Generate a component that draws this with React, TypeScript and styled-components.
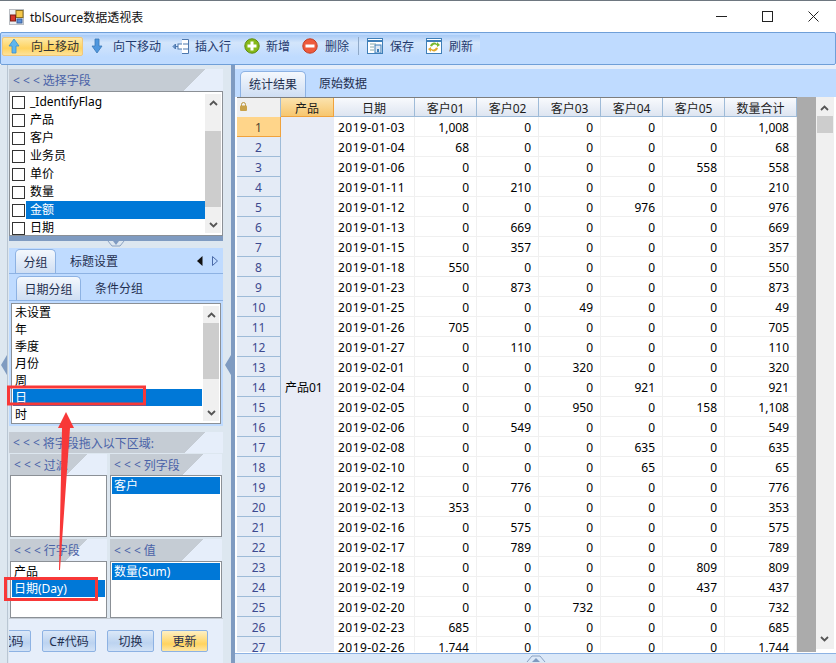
import React from 'react'
import styled, { createGlobalStyle } from 'styled-components'

const FONT = `"Noto Sans", "Noto Sans CJK SC", sans-serif`

const GlobalStyle = createGlobalStyle`
  html, body {
    margin: 0;
    padding: 0;
    background: #fff;
  }
  body {
    font-family: ${FONT};
    font-size: 12px;
    color: #000;
  }
`

const Win = styled.div`
  position: relative;
  width: 836px;
  height: 663px;
  overflow: hidden;
  background: #fff;
  border-top: 1px solid #6e7780;
  box-sizing: border-box;
  display: flex;
  flex-direction: column;
`

const TitleBar = styled.div`
  height: 31px;
  flex: none;
  display: flex;
  align-items: center;
  padding-left: 9px;
  gap: 6px;
`

const TitleText = styled.div`
  flex: 1;
  font-size: 12px;
  color: #111;
`

const WinButtons = styled.div`
  display: flex;
  align-items: center;
  padding-right: 17px;
  gap: 35px;
`

const Toolbar = styled.div`
  height: 33px;
  flex: none;
  box-sizing: border-box;
  background: #bfdbff;
  border: 1px solid #6f9fd8;
  border-radius: 2px;
  padding: 2px 0 0 1px;
`

const ToolStrip = styled.div`
  width: 478px;
  height: 22px;
  display: flex;
  align-items: center;
  background: linear-gradient(#a9cbf6 0%, #d3e5fb 35%, #bfdbff 100%);
`

const ToolButton = styled.div<{ $active?: boolean; $w: number; $pad: number; $gap: number }>`
  width: ${p => p.$w}px;
  height: 19px;
  flex: none;
  box-sizing: border-box;
  display: flex;
  align-items: center;
  padding-left: ${p => p.$pad}px;
  gap: ${p => p.$gap}px;
  color: #1f3a6e;
  white-space: nowrap;
  ${p => p.$active && `
    color: #333;
    background: linear-gradient(#fde9a8, #ffd35f 60%, #fde29a);
    border: 1px solid #f2c878;
    border-radius: 2px;
  `}
`

const ToolSep = styled.div`
  width: 1px;
  height: 18px;
  margin: 0 8px 0 7px;
  flex: none;
  background: #8fa9c8;
`

const Body = styled.div`
  flex: 1;
  min-height: 0;
  display: flex;
  background: #dde7f0;
`

const LeftPanel = styled.div`
  width: 231px;
  flex: none;
  position: relative;
  box-sizing: border-box;
  padding: 4px 8px 0 9px;
  display: flex;
  flex-direction: column;
  overflow: hidden;
  background: linear-gradient(90deg, #dde7f0 7px, #b9c6d3 7px, #b9c6d3 8px, #dde7f0 8px);
`

const SideGrip = styled.div<{ $x: number }>`
  position: absolute;
  left: ${p => p.$x}px;
  top: 290px;
  width: 0;
  height: 0;
  border-top: 10px solid transparent;
  border-bottom: 10px solid transparent;
  border-right: 6px solid #7f9bc1;
`

const Section = styled.div`
  display: flex;
  flex-direction: column;
`

const Cap = styled.div<{ $cut: number; $h?: number }>`
  height: ${p => p.$h ?? 22}px;
  flex: none;
  box-sizing: border-box;
  padding-left: 4px;
  display: flex;
  align-items: center;
  font-size: 12px;
  color: #4a63a8;
  white-space: nowrap;
  background: linear-gradient(135deg, #c5ccd4 ${p => p.$cut}px, #e6eefa ${p => p.$cut}px);
`

const Chevrons = styled.span`
  margin-right: 3px;
  color: #4a63a8;
`

const ListBox = styled.div<{ $h: number }>`
  height: ${p => p.$h}px;
  flex: none;
  box-sizing: border-box;
  background: #fff;
  border: 1px solid #8b9096;
  display: flex;
  overflow: hidden;
`

const ListItems = styled.div<{ $top?: number; $side?: number }>`
  flex: 1;
  min-width: 0;
  padding: ${p => p.$top ?? 1}px ${p => p.$side ?? 0}px 0;
`

const CheckRow = styled.div`
  height: 18px;
  display: flex;
  align-items: center;
  padding-left: 2px;
`

const Box = styled.span`
  width: 13px;
  height: 13px;
  flex: none;
  box-sizing: border-box;
  border: 1px solid #333;
  background: #fff;
  margin-right: 1px;
`

const ItemText = styled.div<{ $sel?: boolean; $h?: number; $pad?: number }>`
  flex: 1;
  height: ${p => p.$h ?? 18}px;
  line-height: ${p => p.$h ?? 18}px;
  padding-left: ${p => p.$pad ?? 2}px;
  white-space: nowrap;
  ${p => p.$sel && 'background: #0078d7; color: #fff;'}
`

const VScroll = styled.div`
  width: 16px;
  flex: none;
  margin: 2px 1px 2px 0;
  background: #f0f0f0;
  display: flex;
  flex-direction: column;
`

const ScrollBtn = styled.div`
  height: 17px;
  flex: none;
  display: flex;
  align-items: center;
  justify-content: center;
`

const Track = styled.div`
  flex: 1;
  min-height: 0;
`

const Thumb = styled.div<{ $top: number; $h: number }>`
  margin-top: ${p => p.$top}px;
  height: ${p => p.$h}px;
  background: #cdcdcd;
`

const BlueStrip = styled.div`
  height: 5px;
  flex: none;
  background: #7f9bc1;
`

const SplitGrip = styled.div<{ $h: number }>`
  height: ${p => p.$h}px;
  flex: none;
  display: flex;
  justify-content: center;
`

const TabArea = styled.div`
  height: 178px;
  flex: none;
  background: #bfdbff;
  display: flex;
  flex-direction: column;
`

const TabRow = styled.div<{ $h: number; $pad: number }>`
  height: ${p => p.$h}px;
  flex: none;
  box-sizing: border-box;
  display: flex;
  align-items: flex-end;
  padding-left: ${p => p.$pad}px;
  border-bottom: 1px solid #8db2e3;
  gap: 14px;
`

const Tab = styled.div<{ $on?: boolean; $w?: number; $tall?: boolean }>`
  height: ${p => (p.$tall ? 26 : 24)}px;
  padding-bottom: ${p => (p.$tall ? 2 : 0)}px;
  box-sizing: border-box;
  display: flex;
  align-items: center;
  justify-content: center;
  color: #1f2f4f;
  font-size: 12px;
  white-space: nowrap;
  ${p => p.$w && `width: ${p.$w}px;`}
  ${p => p.$on && `
    background: linear-gradient(#f4f8fd, #cfdef3);
    border: 1px solid #8db2e3;
    border-bottom: 0;
    border-radius: 5px 5px 0 0;
  `}
`

const TabArrows = styled.div`
  margin-left: auto;
  align-self: center;
  display: flex;
  gap: 9px;
  padding-right: 5px;
`

const InnerFrame = styled.div`
  margin: 2px 2px 0;
`

const DropZones = styled.div`
  display: grid;
  grid-template-columns: 97px 112px;
  column-gap: 3px;
  row-gap: 2px;
  padding: 1px 0 0 1px;
`

const Zone = styled.div`
  display: flex;
  flex-direction: column;
`

const Footer = styled.div`
  height: 45px;
  flex: none;
  background: #e6eefa;
  display: flex;
  justify-content: flex-end;
  gap: 11px;
  padding: 11px 15px 0 0;
  box-sizing: border-box;
  overflow: hidden;
  border-top: 1px solid #c5ccd4;
`

const FootButton = styled.div<{ $w: number; $hot?: boolean }>`
  width: ${p => p.$w}px;
  flex: none;
  height: 22px;
  box-sizing: border-box;
  border: 1px solid #8db2e3;
  border-radius: 2px;
  display: flex;
  align-items: center;
  justify-content: center;
  color: #1f2f4f;
  white-space: nowrap;
  background: ${p =>
    p.$hot
      ? 'linear-gradient(#fdf0c4, #ffd35f 65%, #fee7a6)'
      : 'linear-gradient(#dbe8f8, #bcd3f0 60%, #d2e2f6)'};
  ${p => p.$hot && 'margin-left: -4px;'}
`

const VBar = styled.div`
  width: 4px;
  flex: none;
  background: #7f9bc1;
`

const RightPanel = styled.div`
  flex: 1;
  min-width: 0;
  display: flex;
  flex-direction: column;
`

const LightStrip = styled.div`
  height: 4px;
  flex: none;
  background: #e6eefa;
`

const ResultTabs = styled.div`
  height: 28px;
  flex: none;
  box-sizing: border-box;
  background: #bfdbff;
  display: flex;
  align-items: flex-end;
  padding-left: 5px;
  gap: 13px;
`

const GridWrap = styled.div`
  height: 556px;
  flex: none;
  display: flex;
  background: #fff;
  padding-left: 2px;
  border-bottom: 1px solid #fff;
  box-sizing: border-box;
`

const DataGrid = styled.div`
  width: 560px;
  flex: none;
  display: grid;
  grid-template-columns: 44px 53px 81px 62px 62px 62px 62px 62px 72px;
  grid-template-rows: 19px;
  grid-auto-rows: 20px;
  overflow: hidden;
  align-content: start;
  border-top: 1px solid #7d7d7d;
`

const Corner = styled.div`
  background: #f0f0f0;
  border-right: 1px solid #9ebbd8;
  padding: 4px 0 0 3px;
  box-sizing: border-box;
`

const HeadCell = styled.div<{ $hot?: boolean }>`
  box-sizing: border-box;
  display: flex;
  align-items: center;
  justify-content: center;
  padding-top: 1px;
  color: #1c1c1c;
  border-right: 1px solid #9ebbd8;
  border-bottom: 1px solid #9ebbd8;
  background: linear-gradient(#f8fafd, #dde5f1);
  ${p => p.$hot && `
    background: linear-gradient(#fbe3ae, #f7c66e);
    border-right: 1px solid #f0a23c;
    border-bottom: 1px solid #f0a23c;
  `}
`

const RowHead = styled.div<{ $hot?: boolean }>`
  grid-column: 1;
  box-sizing: border-box;
  display: flex;
  align-items: center;
  justify-content: center;
  padding-top: 1px;
  color: #3d4a8f;
  background: #e4ebf6;
  border-right: 1px solid #9ebbd8;
  border-bottom: 1px solid #9ebbd8;
  ${p => p.$hot && `
    color: #4f4632;
    background: #ffd58a;
    border-right: 1px solid #f0a23c;
    border-bottom: 1px solid #f0a23c;
  `}
`

const ProductCell = styled.div`
  grid-column: 2;
  grid-row: 2 / span 27;
  background: #e8ecf6;
  display: flex;
  align-items: center;
  padding-left: 4px;
`

const Cell = styled.div`
  box-sizing: border-box;
  display: flex;
  align-items: center;
  padding: 1px 7px 0 0;
  justify-content: flex-end;
  border-right: 1px solid #f0f0f0;
  border-bottom: 1px solid #f0f0f0;
  background: #fff;
`

const DateCell = styled(Cell)`
  grid-column: 3;
  justify-content: flex-start;
  padding: 1px 0 0 4px;
  letter-spacing: 0.45px;
`

const GreyFill = styled.div`
  width: 19px;
  flex: none;
  background: #ababab;
`

const GridScroll = styled.div`
  width: 18px;
  flex: none;
  margin-bottom: 3px;
  background: #f0f0f0;
  display: flex;
  justify-content: center;
`

const BottomSplit = styled.div`
  height: 9px;
  flex: none;
  box-sizing: border-box;
  background: #dbe8f8;
  border-top: 1px solid #8db2e3;
  display: flex;
  justify-content: center;
`

const Overlay = styled.svg`
  position: absolute;
  left: 0;
  top: -1px;
  width: 836px;
  height: 663px;
  pointer-events: none;
`

const Chevron = ({ down }: { down?: boolean }) => (
  <svg width="9" height="6" viewBox="0 0 9 6">
    <path
      d={down ? 'M1 1l3.5 3.5L8 1' : 'M1 5l3.5-3.5L8 5'}
      fill="none"
      stroke="#555"
      strokeWidth="1.8"
    />
  </svg>
)

const Scrollbar = ({ top, h }: { top: number; h: number }) => (
  <VScroll>
    <ScrollBtn>
      <Chevron />
    </ScrollBtn>
    <Track>
      <Thumb $top={top} $h={h} />
    </Track>
    <ScrollBtn>
      <Chevron down />
    </ScrollBtn>
  </VScroll>
)

const AppIcon = () => (
  <svg width="15" height="16" viewBox="0 0 15 16">
    <rect x="0.5" y="0.5" width="14" height="15" fill="#eef0f2" stroke="#b9bdc2" />
    <rect x="7" y="1.5" width="7" height="7" fill="#f6c84a" stroke="#8a6d1e" />
    <rect x="1.5" y="6" width="5" height="6" fill="#d9362b" stroke="#7d1f18" />
    <rect x="8" y="10" width="5" height="4" fill="#5b8fd8" stroke="#3a5f98" />
  </svg>
)

const ArrowUp = () => (
  <svg width="12" height="16" viewBox="0 0 12 16">
    <path d="M6 1L11 8H8V15H4V8H1Z" fill="#5fb6ee" stroke="#3a8ecb" strokeWidth="0.8" />
  </svg>
)

const ArrowDown = () => (
  <svg width="12" height="16" viewBox="0 0 12 16">
    <path d="M6 15L1 8H4V1H8V8H11Z" fill="#4f97de" stroke="#3a78b8" strokeWidth="0.8" />
  </svg>
)

const InsertIcon = () => (
  <svg width="17" height="17" viewBox="0 0 17 17">
    <path d="M1 8.5L3.5 6v5zM4 8.5h2" fill="#6c96c8" stroke="#4d78ae" />
    <rect x="6" y="6" width="5" height="5" fill="#fff" stroke="#4d78ae" />
    <path d="M10 1.5h6.5v14H10M11 6h5.5M11 11h5.5" fill="#fff" stroke="#4d78ae" />
  </svg>
)

const RoundIcon = ({ bg, edge, d }: { bg: string; edge: string; d: string }) => (
  <svg width="16" height="16" viewBox="0 0 16 16">
    <circle cx="8" cy="8" r="7.2" fill={bg} stroke={edge} />
    <path d={d} fill="#fff" />
  </svg>
)

const SheetIcon = () => (
  <svg width="16" height="16" viewBox="0 0 16 16">
    <rect x="0.5" y="0.5" width="15" height="15" fill="#fff" stroke="#3f7fb8" />
    <path d="M1 3h14" stroke="#3f7fb8" strokeWidth="2" />
    <path d="M3 6h6M3 9h4M3 12h4" stroke="#8aa" />
    <rect x="8" y="7" width="6" height="8" fill="#dfeaf6" stroke="#3f7fb8" />
    <rect x="10" y="11" width="2" height="3" fill="#3f7fb8" />
  </svg>
)

const RefreshIcon = () => (
  <svg width="16" height="16" viewBox="0 0 16 16">
    <rect x="0.5" y="0.5" width="15" height="15" fill="#fff" stroke="#3f7fb8" />
    <path d="M1 3h14" stroke="#3f7fb8" strokeWidth="2" />
    <path d="M4 8a4 4 0 0 1 7-2V4l3 3-3 2V7.5a3 3 0 0 0-5 1z" fill="#7ab82e" />
    <path d="M12 10a4 4 0 0 1-7 2v2l-3-3 3-2v1.5a3 3 0 0 0 5-1z" fill="#e2a92a" />
  </svg>
)

const LockIcon = () => (
  <svg width="7" height="9" viewBox="0 0 7 9" style={{ display: 'block' }}>
    <path d="M1.5 4V2.5a2 2 0 0 1 4 0V4" fill="none" stroke="#b8953e" />
    <rect x="0" y="3.5" width="7" height="5.5" rx="1" fill="#c9a24a" />
  </svg>
)

const tools = [
  { label: '向上移动', w: 81, pad: 5, gap: 11, icon: <ArrowUp />, active: true },
  { label: '向下移动', w: 84, pad: 8, gap: 10, icon: <ArrowDown /> },
  { label: '插入行', w: 73, pad: 5, gap: 6, icon: <InsertIcon /> },
  { label: '新增', w: 56, pad: 4, gap: 6, icon: <RoundIcon bg="#86b91a" edge="#5f8c10" d="M6.5 3.5h3v3h3v3h-3v3h-3v-3h-3v-3h3z" /> },
  { label: '删除', w: 55, pad: 6, gap: 7, icon: <RoundIcon bg="#ee5a3c" edge="#c23c22" d="M3.5 6.5h9v3h-9z" /> },
]

const fields = ['_IdentifyFlag', '产品', '客户', '业务员', '单价', '数量', '金额', '日期']
const dateGroups = ['未设置', '年', '季度', '月份', '周', '日', '时']
const heads = ['日期', '客户01', '客户02', '客户03', '客户04', '客户05', '数量合计']

type Row = [string, number, number, number, number, number]

const rows: Row[] = [
  ['01-03', 1008, 0, 0, 0, 0],
  ['01-04', 68, 0, 0, 0, 0],
  ['01-06', 0, 0, 0, 0, 558],
  ['01-11', 0, 210, 0, 0, 0],
  ['01-12', 0, 0, 0, 976, 0],
  ['01-13', 0, 669, 0, 0, 0],
  ['01-15', 0, 357, 0, 0, 0],
  ['01-18', 550, 0, 0, 0, 0],
  ['01-23', 0, 873, 0, 0, 0],
  ['01-25', 0, 0, 49, 0, 0],
  ['01-26', 705, 0, 0, 0, 0],
  ['01-27', 0, 110, 0, 0, 0],
  ['02-01', 0, 0, 320, 0, 0],
  ['02-04', 0, 0, 0, 921, 0],
  ['02-05', 0, 0, 950, 0, 158],
  ['02-06', 0, 549, 0, 0, 0],
  ['02-08', 0, 0, 0, 635, 0],
  ['02-10', 0, 0, 0, 65, 0],
  ['02-12', 0, 776, 0, 0, 0],
  ['02-13', 353, 0, 0, 0, 0],
  ['02-16', 0, 575, 0, 0, 0],
  ['02-17', 0, 789, 0, 0, 0],
  ['02-18', 0, 0, 0, 0, 809],
  ['02-19', 0, 0, 0, 0, 437],
  ['02-20', 0, 0, 732, 0, 0],
  ['02-23', 685, 0, 0, 0, 0],
  ['02-26', 1744, 0, 0, 0, 0],
]

const fmt = (n: number) => n.toLocaleString('en-US')

const CapLabel = ({ text }: { text: string }) => (
  <>
    <Chevrons>{'< < <'}</Chevrons>
    {text}
  </>
)

const App = () => (
  <Win>
    <GlobalStyle />
    <TitleBar>
      <AppIcon />
      <TitleText>tblSource数据透视表</TitleText>
      <WinButtons>
        <svg width="11" height="11" viewBox="0 0 11 11">
          <path d="M0 5.5h11" stroke="#222" />
        </svg>
        <svg width="11" height="11" viewBox="0 0 11 11">
          <rect x="0.5" y="0.5" width="10" height="10" fill="none" stroke="#222" />
        </svg>
        <svg width="11" height="11" viewBox="0 0 11 11">
          <path d="M0.5 0.5l10 10M10.5 0.5l-10 10" stroke="#222" />
        </svg>
      </WinButtons>
    </TitleBar>
    <Toolbar>
      <ToolStrip>
        {tools.map(t => (
          <ToolButton key={t.label} $w={t.w} $pad={t.pad} $gap={t.gap} $active={t.active}>
            {t.icon}
            {t.label}
          </ToolButton>
        ))}
        <ToolSep />
        <ToolButton $w={59} $pad={0} $gap={7}>
          <SheetIcon />
          保存
        </ToolButton>
        <ToolButton $w={54} $pad={0} $gap={7}>
          <RefreshIcon />
          刷新
        </ToolButton>
      </ToolStrip>
    </Toolbar>
    <Body>
      <LeftPanel>
        <SideGrip $x={1} />
        <SideGrip $x={225} />
        <Section>
          <Cap $cut={139}>
            <CapLabel text="选择字段" />
          </Cap>
          <ListBox $h={145}>
            <ListItems>
              {fields.map(f => (
                <CheckRow key={f}>
                  <Box />
                  <ItemText $pad={4} $sel={f === '金额'}>
                    {f}
                  </ItemText>
                </CheckRow>
              ))}
            </ListItems>
            <Scrollbar top={20} h={76} />
          </ListBox>
          <BlueStrip />
          <SplitGrip $h={7}>
            <svg width="18" height="7" viewBox="0 0 18 7">
              <path d="M1 0l4 5h8l4-5" fill="none" stroke="#8aa2c2" />
              <path d="M6 0h6L9 4z" fill="#7f9bc1" />
            </svg>
          </SplitGrip>
        </Section>
        <TabArea>
          <TabRow $h={26} $pad={6}>
            <Tab $on $w={41}>
              分组
            </Tab>
            <Tab>标题设置</Tab>
            <TabArrows>
              <svg width="6" height="10" viewBox="0 0 6 10">
                <path d="M5.5 0v10L0 5z" fill="#111" />
              </svg>
              <svg width="6" height="10" viewBox="0 0 6 10">
                <path d="M0.5 0.5v9L5.5 5z" fill="none" stroke="#4a6aa8" />
              </svg>
            </TabArrows>
          </TabRow>
          <TabRow $h={27} $pad={7}>
            <Tab $on $w={65}>
              日期分组
            </Tab>
            <Tab>条件分组</Tab>
          </TabRow>
          <InnerFrame>
            <ListBox $h={121}>
              <ListItems $top={0} $side={1}>
                {dateGroups.map(g => (
                  <ItemText key={g} $h={17} $sel={g === '日'}>
                    {g}
                  </ItemText>
                ))}
              </ListItems>
              <Scrollbar top={0} h={56} />
            </ListBox>
          </InnerFrame>
        </TabArea>
        <Section>
          <SplitGrip $h={6} />
          <Cap $cut={139} $h={21}>
            <CapLabel text="将字段拖入以下区域:" />
          </Cap>
          <DropZones>
            <Zone>
              <Cap $cut={55} $h={21}>
                <CapLabel text="过滤" />
              </Cap>
              <ListBox $h={62} />
            </Zone>
            <Zone>
              <Cap $cut={66} $h={21}>
                <CapLabel text="列字段" />
              </Cap>
              <ListBox $h={62}>
                <ListItems $side={1}>
                  <ItemText $sel $h={17}>
                    客户
                  </ItemText>
                </ListItems>
              </ListBox>
            </Zone>
            <Zone>
              <Cap $cut={55}>
                <CapLabel text="行字段" />
              </Cap>
              <ListBox $h={57}>
                <ListItems $side={1}>
                  <ItemText $h={17}>产品</ItemText>
                  <ItemText $sel $h={17}>
                    日期(Day)
                  </ItemText>
                </ListItems>
              </ListBox>
            </Zone>
            <Zone>
              <Cap $cut={66}>
                <CapLabel text="值" />
              </Cap>
              <ListBox $h={57}>
                <ListItems $side={1}>
                  <ItemText $sel $h={17}>
                    数量(Sum)
                  </ItemText>
                </ListItems>
              </ListBox>
            </Zone>
          </DropZones>
          <Footer>
            <FootButton $w={54}>VB代码</FootButton>
            <FootButton $w={54}>C#代码</FootButton>
            <FootButton $w={47}>切换</FootButton>
            <FootButton $w={47} $hot>
              更新
            </FootButton>
          </Footer>
        </Section>
      </LeftPanel>
      <VBar />
      <RightPanel>
        <LightStrip />
        <ResultTabs>
          <Tab $on $w={66} $tall>
            统计结果
          </Tab>
          <Tab $tall>原始数据</Tab>
        </ResultTabs>
        <GridWrap>
          <DataGrid>
            <Corner>
              <LockIcon />
            </Corner>
            <HeadCell $hot>产品</HeadCell>
            {heads.map(h => (
              <HeadCell key={h}>{h}</HeadCell>
            ))}
            <ProductCell>产品01</ProductCell>
            {rows.map((r, i) => {
              const [date, ...nums] = r
              const total = nums.reduce((a, b) => a + b, 0)
              return (
                <React.Fragment key={date}>
                  <RowHead $hot={i === 0}>{i + 1}</RowHead>
                  <DateCell>2019-{date}</DateCell>
                  {nums.map((n, j) => (
                    <Cell key={j}>{fmt(n)}</Cell>
                  ))}
                  <Cell>{fmt(total)}</Cell>
                </React.Fragment>
              )
            })}
          </DataGrid>
          <GreyFill />
          <GridScroll>
            <Scrollbar top={0} h={17} />
          </GridScroll>
        </GridWrap>
        <BottomSplit>
          <svg width="20" height="8" viewBox="0 0 20 8">
            <path d="M1 8l5-6h8l5 6" fill="none" stroke="#8aa2c2" />
            <path d="M6 8h8l-4-4z" fill="#7f9bc1" />
          </svg>
        </BottomSplit>
      </RightPanel>
    </Body>
    <Overlay viewBox="0 0 836 663">
      <rect x="8.5" y="387" width="136" height="17" fill="none" stroke="#f83838" strokeWidth="3" />
      <rect x="5.5" y="578.5" width="91" height="21" fill="none" stroke="#f83838" strokeWidth="3" />
      <path d="M66 412L74 428H70L60 570H59L62 428H58Z" fill="#f83838" />
    </Overlay>
  </Win>
)

export default App
